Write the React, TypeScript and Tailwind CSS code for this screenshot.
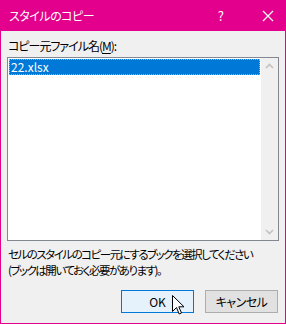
import React from "react";

const jp = "font-['Noto_Sans_CJK_JP','Noto_Sans',sans-serif] [font-feature-settings:'palt']";

function Chevron({ down }: { down?: boolean }) {
  return (
    <svg width="9" height="6" viewBox="0 0 9 6" className={down ? "rotate-180" : ""}>
      <path d="M1 5 L4.5 1.5 L8 5" fill="none" stroke="#c2c2c2" strokeWidth="1.6" />
    </svg>
  );
}

export default function App() {
  return (
    <div className={`relative flex h-[324px] w-[286px] flex-col bg-[#e3008c] px-px pb-px ${jp}`}>
      {/* title bar */}
      <div className="flex h-[31px] items-center text-white">
        <span className="ml-[8px] text-[12px] leading-none tracking-[-0.5px]">スタイルのコピー</span>
        <span className="ml-auto mr-[38px] text-[13px] leading-none">?</span>
        <svg width="12" height="12" viewBox="0 0 12 12" className="mr-[11px]">
          <path d="M1 1 L11 11 M11 1 L1 11" stroke="white" strokeWidth="1.2" />
        </svg>
      </div>

      {/* client area */}
      <div className="flex flex-1 flex-col bg-[#f0f0f0] px-[6px] pb-[10px] text-[#000]">
        <div className="mt-[7px] whitespace-nowrap pl-[1px] text-[12px] leading-[16px] tracking-[-1px]">
          コピー元ファイル名(<span className="underline underline-offset-2">M</span>):
        </div>

        <div className="mt-[3px] flex h-[184px] w-[272px] border border-[#828790] bg-white">
          <div className="flex-1 p-px">
            <div className="h-[16px] bg-[#0078d7] pl-[2px] text-[12px] leading-[16px] text-white outline outline-1 -outline-offset-1 outline-dotted outline-[#f0a030]">
              22.xlsx
            </div>
          </div>
          <div className="flex w-[17px] flex-col items-center justify-between bg-[#f0f0f0] py-[5px]">
            <Chevron />
            <Chevron down />
          </div>
        </div>

        <div className="mt-[5px] whitespace-nowrap pl-[1px] text-[11.5px] leading-[16px] tracking-[-1.5px]">
          <div>セルのスタイルのコピー元にするブックを選択してください</div>
          <div>(ブックは開いておく必要があります)。</div>
        </div>

        <div className="mt-auto flex justify-end gap-[11px] pr-[1px]">
          <button className="h-[23px] w-[73px] border border-[#0078d7] bg-[#e5f1fb] text-[12px] leading-none">
            OK
          </button>
          <button className="h-[23px] w-[73px] border border-[#adadad] bg-[#e1e1e1] text-[12px] leading-none tracking-[-0.5px]">
            キャンセル
          </button>
        </div>
      </div>

      {/* mouse pointer */}
      <svg width="13" height="21" viewBox="0 0 13 21" className="absolute left-[172px] top-[295px]">
        <path
          d="M0.5 0.5 L0.5 16.5 L4.5 12.5 L7.2 19 L9.5 18 L6.8 11.8 L12 11.8 Z"
          fill="white"
          stroke="black"
          strokeWidth="1"
          strokeLinejoin="miter"
        />
      </svg>
    </div>
  );
}
